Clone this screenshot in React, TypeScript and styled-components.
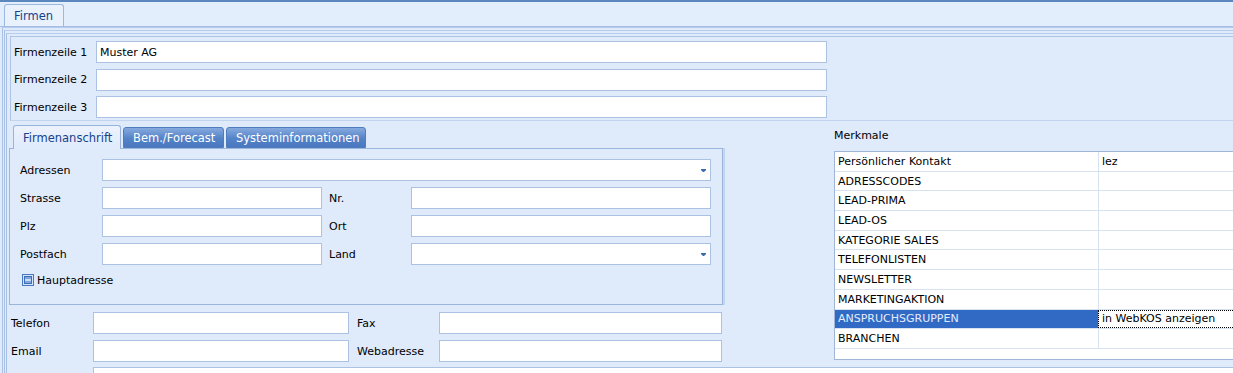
import styled, { createGlobalStyle } from "styled-components";

const GlobalStyle = createGlobalStyle`
  html, body { margin: 0; padding: 0; }
  body {
    background: #dfeafb;
    font-family: "DejaVu Sans", Tahoma, sans-serif;
    font-size: 11px;
    color: #000;
    overflow: hidden;
  }
  * { box-sizing: border-box; }
`;

const Screen = styled.div`
  width: 1233px;
  height: 373px;
  overflow: hidden;
  border-top: 2px solid #5b87bf;
  background: #dfeafb;
`;

const PageTabs = styled.div`
  height: 25px;
  display: flex;
  align-items: flex-end;
  padding-left: 4px;
  background: #e3eefd;
  border-bottom: 1px solid #a4bde2;
`;

const PageTab = styled.div`
  height: 22px;
  width: 60px;
  padding-left: 9px;
  display: flex;
  align-items: center;
  background: #e9f1fd;
  color: #15428b;
  font-size: 11.5px;
  border: 1px solid #9db8df;
  border-bottom: none;
  border-radius: 3px 3px 0 0;
`;

const Frame = styled.div<{ $outer?: boolean }>`
  margin-left: ${(p) => (p.$outer ? "2px" : "0")};
  border-top: 1px solid #b7cbea;
  border-left: 1px solid #a9c1e5;
  padding: 2px 0 0 1px;
`;

const CompanyBox = styled.div`
  margin-left: 2px;
  border-top: 1px solid #aec4e6;
  border-left: 1px solid #aec4e6;
  border-bottom: 1px solid #c2d4ee;
  padding: 4px 0 2px 3px;
  display: flex;
  flex-direction: column;
  gap: 5.5px;
`;

const CompanyRow = styled.div`
  display: grid;
  grid-template-columns: 82px 731px;
  height: 22px;
`;

const Label = styled.div<{ $indent?: number }>`
  display: flex;
  align-items: center;
  height: 22px;
  white-space: nowrap;
  padding-left: ${(p) => p.$indent ?? 0}px;
`;

const Field = styled.div<{ $span?: boolean }>`
  height: 22px;
  background: #fff;
  border: 1px solid #abc2e2;
  padding: 0 3px;
  display: flex;
  align-items: center;
  white-space: nowrap;
  grid-column: ${(p) => (p.$span ? "2 / -1" : "auto")};
`;

const Combo = styled(Field)`
  justify-content: flex-end;
  padding-right: 4px;
`;

const Body = styled.div`
  display: flex;
`;

const LeftColumn = styled.div`
  flex: none;
  margin-left: 1px;
  width: 714px;
  padding-top: 4px;
`;

const SubTabs = styled.div`
  display: flex;
  align-items: flex-end;
  height: 23px;
  padding-left: 4px;
`;

const SubTab = styled.div<{ $active?: boolean; $w: number }>`
  width: ${(p) => p.$w}px;
  height: ${(p) => (p.$active ? 24 : 21)}px;
  margin-bottom: ${(p) => (p.$active ? -1 : 0)}px;
  margin-left: ${(p) => (p.$active ? 0 : 2)}px;
  position: relative;
  z-index: 1;
  padding-left: 9px;
  display: flex;
  align-items: center;
  font-size: 11.5px;
  white-space: nowrap;
  border-radius: 3px 3px 0 0;
  border: 1px solid ${(p) => (p.$active ? "#99b4dc" : "#4f7bbf")};
  border-bottom: ${(p) => (p.$active ? "none" : "1px solid #4f7bbf")};
  color: ${(p) => (p.$active ? "#15428b" : "#fff")};
  background: ${(p) =>
    p.$active
      ? "linear-gradient(#edf3fd, #dfeafb)"
      : "linear-gradient(#86aade, #5583c8 55%, #4a78c0)"};
`;

const Panel = styled.div`
  height: 157px;
  border: 1px solid #9bb5dd;
  box-shadow: 2px 0 0 #c4d6ef;
  padding: 10px 11px 0 10px;
  background: #dfeafb;
`;

const AddressGrid = styled.div`
  display: grid;
  grid-template-columns: 82px 220px 89px 1fr;
  grid-auto-rows: 22px;
  row-gap: 6px;
`;

const CheckRow = styled.div`
  margin-top: 8px;
  padding-left: 2px;
  display: flex;
  align-items: center;
  gap: 3px;
  height: 14px;
`;

const ContactGrid = styled.div`
  margin-top: 7px;
  padding: 0 1px 0 2px;
  display: grid;
  grid-template-columns: 82px 256px 90px 1fr;
  grid-auto-rows: 22px;
  row-gap: 6px;
`;

const RightColumn = styled.div`
  flex: none;
  margin-left: 111px;
  width: 440px;
  padding-top: 8px;
`;

const Caption = styled.div`
  height: 14px;
  line-height: 14px;
`;

const Table = styled.div`
  margin-top: 8px;
  width: 430px;
  height: 209px;
  border: 1px solid #a0b6d8;
  background: #fff;
`;

const TableRow = styled.div`
  display: grid;
  grid-template-columns: 263px 1fr;
  height: 19.7px;
  border-bottom: 1px solid #d7e2f1;
`;

const Cell = styled.div<{ $selected?: boolean; $focus?: boolean; $second?: boolean }>`
  display: flex;
  align-items: center;
  padding-left: 3px;
  white-space: nowrap;
  border-left: ${(p) => (p.$second ? "1px solid #d7e2f1" : "none")};
  background: ${(p) => (p.$selected ? "#316ac5" : "#fff")};
  color: ${(p) => (p.$selected ? "#e4ecfb" : "#000")};
  outline: ${(p) => (p.$focus ? "1px dotted #000" : "none")};
  outline-offset: -1px;
`;

const BottomRow = styled.div`
  margin-top: 5px;
  padding-left: 3px;
  display: grid;
  grid-template-columns: 82px 1200px;
`;

const TallField = styled(Field)`
  height: 40px;
`;

function Arrow() {
  return (
    <svg width="5" height="3" viewBox="0 0 5 3">
      <polygon points="0,0 5,0 5,1 3,3 2,3 0,1" fill="#3b68b2" />
    </svg>
  );
}

function GrayCheck() {
  return (
    <svg width="12" height="12" viewBox="0 0 12 12">
      <rect x="0.5" y="0.5" width="11" height="11" fill="#d6e4f8" stroke="#4a78c0" />
      <rect x="2.5" y="2.5" width="7" height="7" fill="#7ea6de" stroke="#3f6db6" />
      <rect x="3" y="5" width="6" height="2" fill="#c7dbf6" />
    </svg>
  );
}

const merkmale: [string, string][] = [
  ["Persönlicher Kontakt", "lez"],
  ["ADRESSCODES", ""],
  ["LEAD-PRIMA", ""],
  ["LEAD-OS", ""],
  ["KATEGORIE SALES", ""],
  ["TELEFONLISTEN", ""],
  ["NEWSLETTER", ""],
  ["MARKETINGAKTION", ""],
  ["ANSPRUCHSGRUPPEN", "in WebKOS anzeigen"],
  ["BRANCHEN", ""],
];

export default function App() {
  return (
    <Screen>
      <GlobalStyle />
      <PageTabs>
        <PageTab>Firmen</PageTab>
      </PageTabs>
      <Frame $outer>
        <Frame>
          <Frame>
            <CompanyBox>
              <CompanyRow>
                <Label>Firmenzeile 1</Label>
                <Field>Muster AG</Field>
              </CompanyRow>
              <CompanyRow>
                <Label>Firmenzeile 2</Label>
                <Field />
              </CompanyRow>
              <CompanyRow>
                <Label>Firmenzeile 3</Label>
                <Field />
              </CompanyRow>
            </CompanyBox>

            <Body>
              <LeftColumn>
                <SubTabs>
                  <SubTab $active $w={108}>Firmenanschrift</SubTab>
                  <SubTab $w={101}>Bem./Forecast</SubTab>
                  <SubTab $w={140}>Systeminformationen</SubTab>
                </SubTabs>
                <Panel>
                  <AddressGrid>
                    <Label>Adressen</Label>
                    <Combo $span>
                      <Arrow />
                    </Combo>
                    <Label>Strasse</Label>
                    <Field />
                    <Label $indent={7}>Nr.</Label>
                    <Field />
                    <Label>Plz</Label>
                    <Field />
                    <Label $indent={7}>Ort</Label>
                    <Field />
                    <Label>Postfach</Label>
                    <Field />
                    <Label $indent={7}>Land</Label>
                    <Combo>
                      <Arrow />
                    </Combo>
                  </AddressGrid>
                  <CheckRow>
                    <GrayCheck />
                    <span>Hauptadresse</span>
                  </CheckRow>
                </Panel>
                <ContactGrid>
                  <Label>Telefon</Label>
                  <Field />
                  <Label $indent={8}>Fax</Label>
                  <Field />
                  <Label>Email</Label>
                  <Field />
                  <Label $indent={8}>Webadresse</Label>
                  <Field />
                </ContactGrid>
              </LeftColumn>

              <RightColumn>
                <Caption>Merkmale</Caption>
                <Table>
                  {merkmale.map(([name, value]) => {
                    const selected = name === "ANSPRUCHSGRUPPEN";
                    return (
                      <TableRow key={name}>
                        <Cell $selected={selected}>{name}</Cell>
                        <Cell $second $focus={selected}>
                          {value}
                        </Cell>
                      </TableRow>
                    );
                  })}
                </Table>
              </RightColumn>
            </Body>

            <BottomRow>
              <Label />
              <TallField />
            </BottomRow>
          </Frame>
        </Frame>
      </Frame>
    </Screen>
  );
}
